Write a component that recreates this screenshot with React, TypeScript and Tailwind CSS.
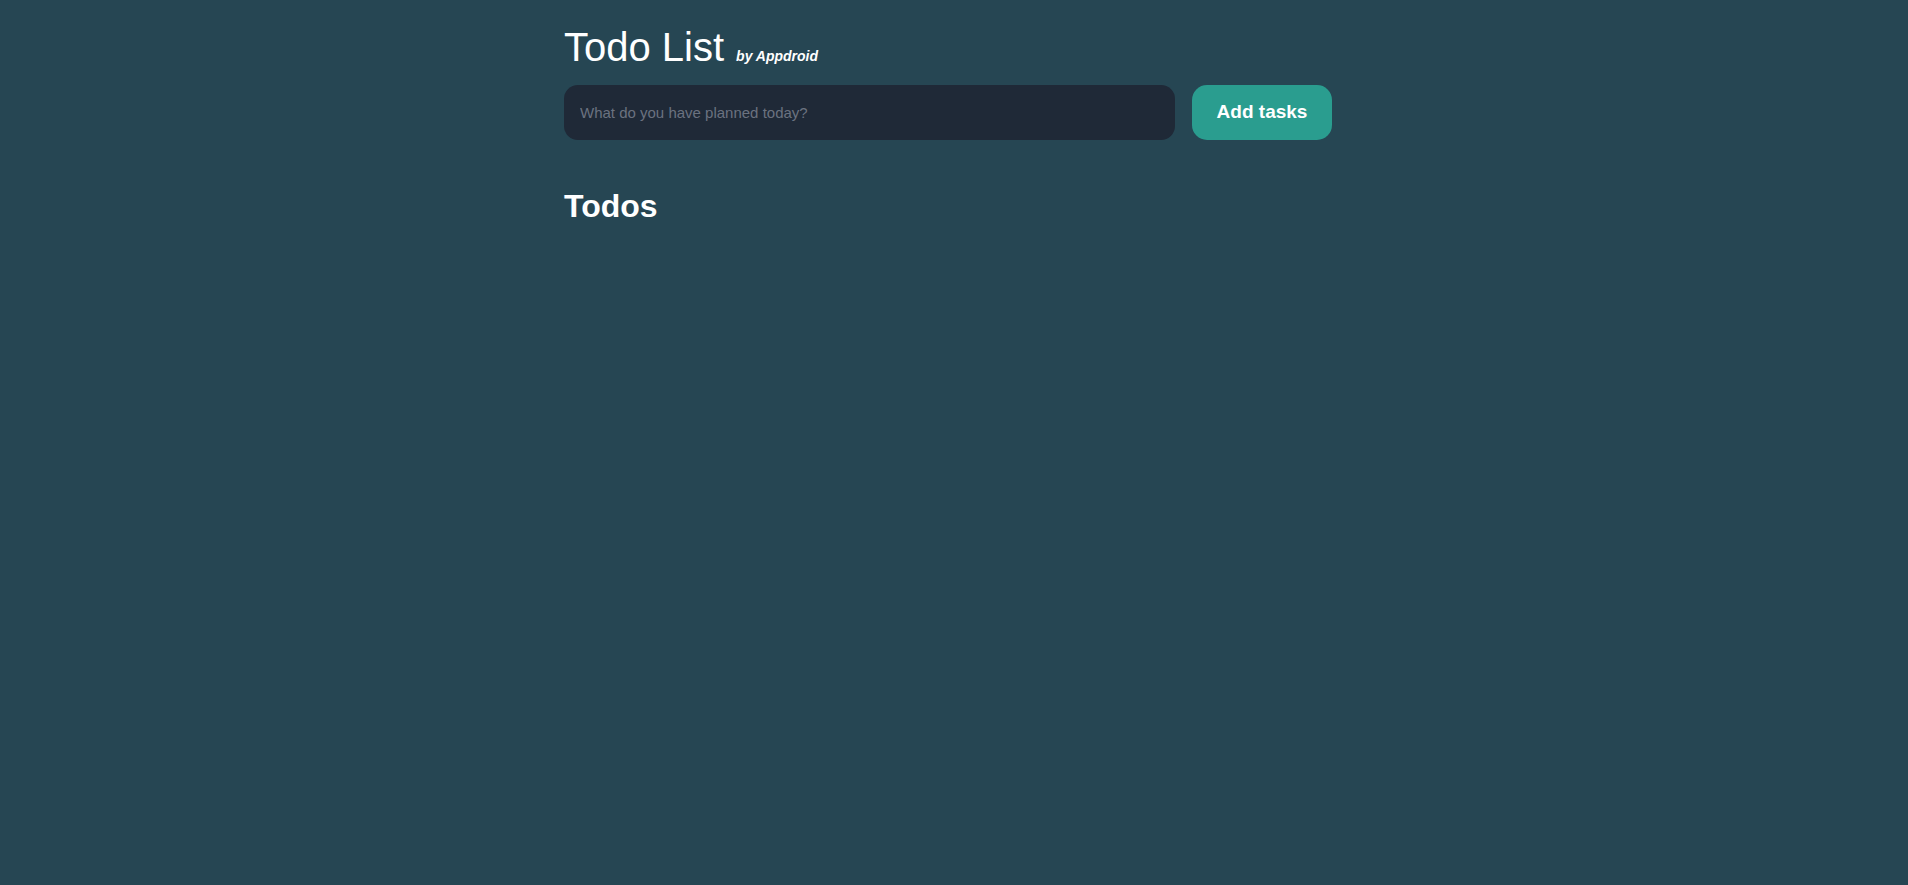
export default function App() {
  return (
    <div className="min-h-screen bg-[#264653] font-['Liberation_Sans',Arial,sans-serif] text-white">
      <div className="mx-auto w-[780px] pt-[27px]">
        <h1 className="flex items-baseline text-[40px] font-normal leading-none">
          Todo List
          <span className="ml-[12px] text-[14px] font-bold italic">by Appdroid</span>
        </h1>

        <form className="mt-[18px] flex gap-[17px]" onSubmit={(e) => e.preventDefault()}>
          <input
            className="h-[55px] w-[611px] rounded-[14px] bg-[#1f2937] px-[16px] text-[15px] text-white outline-none placeholder:text-[#6b7280]"
            placeholder="What do you have planned today?"
          />
          <button className="h-[55px] w-[140px] rounded-[15px] bg-[#2a9d8f] text-[19px] font-bold text-white" type="submit">
            Add tasks
          </button>
        </form>

        <h2 className="mt-[50px] text-[32px] font-bold leading-none">Todos</h2>
      </div>
    </div>
  )
}
